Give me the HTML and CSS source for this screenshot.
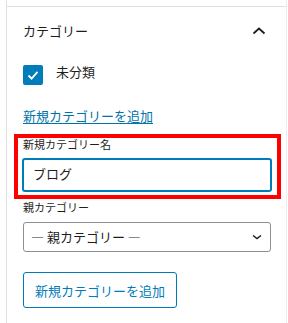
FILE: index.html
```html
<!DOCTYPE html>
<html lang="ja">
<head>
  <meta charset="UTF-8">
  <meta name="viewport" content="width=device-width, initial-scale=1.0">
  <title>カテゴリー</title>
  <link rel="stylesheet" href="styles.css">
</head>
<body>
  <div class="sidebar">
    <div class="prev-panel"></div>

    <div class="panel">
      <div class="panel-head">
        <span class="panel-title">カテゴリー</span>
        <svg class="chevron-up" width="24" height="24" viewBox="0 0 24 24">
          <path d="M6.5 14.5 L12 9.5 L17.5 14.5" fill="none" stroke="#1e1e1e" stroke-width="1.8"/>
        </svg>
      </div>

      <div class="check-row">
        <span class="checkbox">
          <svg width="20" height="20" viewBox="0 0 20 20">
            <path d="M5.5 10.5 L8.6 13.6 L14.5 6.8" fill="none" stroke="#fff" stroke-width="1.8"/>
          </svg>
        </span>
        <span class="check-label">未分類</span>
      </div>

      <a class="add-link" href="#">新規カテゴリーを追加</a>

      <div class="field field-new">
        <label class="field-label" for="newCat">新規カテゴリー名</label>
        <input class="text-input" id="newCat" type="text" value="ブログ">
        <div class="highlight"></div>
      </div>

      <div class="field">
        <div class="field-label">親カテゴリー</div>
        <div class="select">
          <span>— 親カテゴリー —</span>
          <svg width="12" height="12" viewBox="0 0 12 12">
            <path d="M2 4.5 L6 7.5 L10 4.5" fill="none" stroke="#1e1e1e" stroke-width="1.5"/>
          </svg>
        </div>
      </div>

      <button class="add-btn">新規カテゴリーを追加</button>
    </div>
  </div>
</body>
</html>
```

FILE: styles.css
```css
* {
  margin: 0;
  padding: 0;
  box-sizing: border-box;
}

body {
  font-family: "Noto Sans CJK JP", "Noto Sans", sans-serif;
  font-size: 13px;
  color: #1e1e1e;
  background: #fff;
}

.sidebar {
  margin-left: 6px;
  width: 281px;
  min-height: 323px;
  border-left: 1px solid #e0e0e0;
  border-right: 1px solid #ececec;
}

.prev-panel {
  height: 7px;
  border-bottom: 1px solid #e0e0e0;
}

.panel {
  padding: 0 15px 0 16px;
}

.panel-head {
  height: 48px;
  display: flex;
  align-items: center;
  justify-content: space-between;
}

.panel-title {
  font-size: 13px;
  line-height: 20px;
}

.check-row {
  display: flex;
  align-items: flex-start;
  margin-top: 10px;
}

.checkbox {
  width: 20px;
  height: 20px;
  background: #007cba;
  border-radius: 2px;
  display: flex;
}

.check-label {
  margin-left: 13px;
  line-height: 14px;
}

.add-link {
  display: block;
  margin-top: 21px;
  line-height: 20px;
  color: #0073aa;
  text-decoration: underline;
  text-underline-offset: 2px;
}

.field {
  margin-top: 10px;
  margin-bottom: 8px;
}

.field-new {
  position: relative;
}

.field-label {
  display: block;
  font-size: 11px;
  line-height: 16px;
  margin-bottom: 7px;
}

.text-input {
  display: block;
  width: 100%;
  height: 32px;
  padding: 0 9px 3px;
  border: 1px solid #007cba;
  border-radius: 2px;
  box-shadow: 0 0 0 1px #007cba;
  font-family: inherit;
  font-size: 13px;
  color: #1e1e1e;
  outline: none;
}

.highlight {
  position: absolute;
  top: -2px;
  left: -9px;
  right: -10px;
  bottom: -8px;
  border: 4px solid #ff0000;
}

.field-new + .field {
  margin-top: 0;
}

.select {
  height: 30px;
  border: 1px solid #8c8f94;
  border-radius: 3px;
  display: flex;
  align-items: center;
  justify-content: space-between;
  padding: 0 7px 1px 7px;
}

.add-btn {
  margin-top: 12px;
  height: 36px;
  padding: 0 11px;
  background: #fff;
  border: 1px solid #007cba;
  border-radius: 3px;
  color: #007cba;
  font-family: inherit;
  font-size: 13px;
}
```
